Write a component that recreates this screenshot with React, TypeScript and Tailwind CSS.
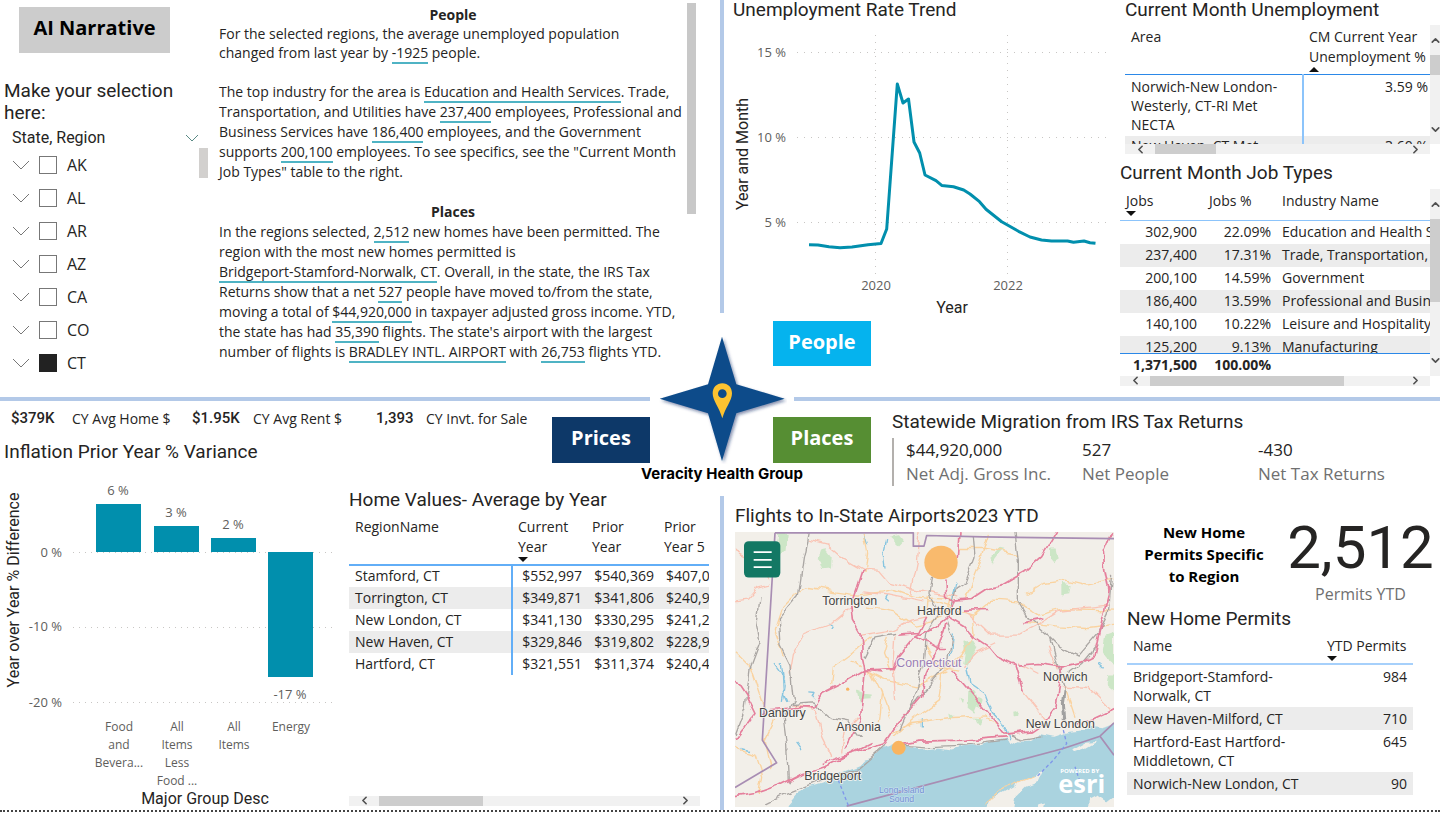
import React from "react";
import { ChevronDown, ChevronLeft, ChevronRight, ChevronUp } from "lucide-react";

const states = ["AK", "AL", "AR", "AZ", "CA", "CO", "CT"];

const jobs = [
  ["302,900", "22.09%", "Education and Health Services"],
  ["237,400", "17.31%", "Trade, Transportation, and Utilities"],
  ["200,100", "14.59%", "Government"],
  ["186,400", "13.59%", "Professional and Business Services"],
  ["140,100", "10.22%", "Leisure and Hospitality"],
  ["125,200", "9.13%", "Manufacturing"],
];

const homes = [
  ["Stamford, CT", "$552,997", "$540,369", "$407,012"],
  ["Torrington, CT", "$349,871", "$341,806", "$240,935"],
  ["New London, CT", "$341,130", "$330,295", "$241,208"],
  ["New Haven, CT", "$329,846", "$319,802", "$228,941"],
  ["Hartford, CT", "$321,551", "$311,374", "$240,460"],
];

const permits = [
  ["Bridgeport-Stamford-Norwalk, CT", "984"],
  ["New Haven-Milford, CT", "710"],
  ["Hartford-East Hartford-Middletown, CT", "645"],
  ["Norwich-New London, CT", "90"],
];

const Title = ({ children }: { children: React.ReactNode }) => (
  <h2 className="font-['Roboto',sans-serif] text-[19px] leading-5 whitespace-nowrap">{children}</h2>
);

const Fact = ({ children }: { children: React.ReactNode }) => (
  <span className="border-b-2 border-[#4fb3c4]">{children}</span>
);

const SortMark = ({ up }: { up?: boolean }) => (
  <svg viewBox="0 0 10 5" className="block h-[5px] w-[10px]">
    <path d={up ? "M0 5h10L5 0z" : "M0 0h10L5 5z"} fill="#111" />
  </svg>
);

const HScroll = ({ thumb }: { thumb: string }) => (
  <div className="flex h-[10px] items-center bg-[#f1f1f1]">
    <button aria-label="Scroll left" className="flex w-[30px] justify-center">
      <ChevronLeft size={13} strokeWidth={3} color="#505050" />
    </button>
    <div className="h-full flex-1">
      <div className={"h-full bg-[#cdcdcd] " + thumb}></div>
    </div>
    <button aria-label="Scroll right" className="flex w-[30px] justify-center">
      <ChevronRight size={13} strokeWidth={3} color="#505050" />
    </button>
  </div>
);

const VScroll = ({ thumb }: { thumb: string }) => (
  <div className="flex w-[10px] shrink-0 flex-col items-center overflow-hidden bg-[#f1f1f1]">
    <button aria-label="Scroll up" className="flex h-[30px] items-center">
      <ChevronUp size={13} strokeWidth={3} color="#505050" />
    </button>
    <div className="w-full flex-1">
      <div className={"w-full bg-[#cdcdcd] " + thumb}></div>
    </div>
    <button aria-label="Scroll down" className="flex h-[30px] items-center">
      <ChevronDown size={13} strokeWidth={3} color="#505050" />
    </button>
  </div>
);

const Slicer = () => (
  <div className="w-[219px] shrink-0 pt-[7px]">
    <button className="ml-[19px] h-[46px] w-[151px] bg-[#ccc] pb-1 text-xl font-bold text-black">
      AI Narrative
    </button>
    <h2 className="mt-[27px] ml-1 font-['Roboto',sans-serif] text-[19px] leading-[22px]">
      Make your selection here:
    </h2>
    <div className="mt-1 mr-5 ml-3 flex h-5 items-center justify-between font-['Roboto',sans-serif] text-base">
      State, Region
      <svg viewBox="0 0 14 8" className="h-2 w-[14px]">
        <path d="M1 1l6 6 6-6" fill="none" stroke="#5a8a85" />
      </svg>
    </div>
    <div className="flex">
      <ul className="w-[199px]">
        {states.map((s) => (
          <li key={s} className="flex h-[33px] items-center pl-3">
            <svg viewBox="0 0 18 10" className="h-[10px] w-[18px]">
              <path d="M1 1l8 8 8-8" fill="none" stroke="#777" />
            </svg>
            <label className="ml-[9px] flex items-center gap-[10px] text-base">
              <input
                type="checkbox"
                defaultChecked={s === "CT"}
                className="h-[18px] w-[18px] appearance-none border border-[#777] bg-white checked:border-[#222] checked:bg-[#222]"
              />
              {s}
            </label>
          </li>
        ))}
      </ul>
      <div className="h-[30px] w-[9px] bg-[#d2d0ce]"></div>
    </div>
  </div>
);

const Narrative = () => (
  <div className="w-[468px] shrink-0 pt-[5px] text-sm whitespace-nowrap">
    <h3 className="text-center leading-[19px] font-bold">People</h3>
    <p className="leading-[19px]">
      For the selected regions, the average unemployed population
      <br />
      changed from last year by <Fact>-1925</Fact> people.
    </p>
    <p className="mt-5 leading-5">
      The top industry for the area is <Fact>Education and Health Services</Fact>. Trade,
      <br />
      Transportation, and Utilities have <Fact>237,400</Fact> employees, Professional and
      <br />
      Business Services have <Fact>186,400</Fact> employees, and the Government
      <br />
      supports <Fact>200,100</Fact> employees. To see specifics, see the "Current Month
      <br />
      Job Types" table to the right.
    </p>
    <h3 className="mt-5 text-center leading-5 font-bold">Places</h3>
    <p className="leading-5">
      In the regions selected, <Fact>2,512</Fact> new homes have been permitted. The
      <br />
      region with the most new homes permitted is
      <br />
      <Fact>Bridgeport-Stamford-Norwalk, CT</Fact>. Overall, in the state, the IRS Tax
      <br />
      Returns show that a net <Fact>527</Fact> people have moved to/from the state,
      <br />
      moving a total of <Fact>$44,920,000</Fact> in taxpayer adjusted gross income. YTD,
      <br />
      the state has had <Fact>35,390</Fact> flights. The state's airport with the largest
      <br />
      number of flights is <Fact>BRADLEY INTL. AIRPORT</Fact> with <Fact>26,753</Fact> flights YTD.
    </p>
  </div>
);

const TrendChart = () => (
  <svg viewBox="0 20 388 300" className="block h-[300px] w-[388px]">
    <g stroke="#c8c6c4" strokeWidth="1" strokeDasharray="1 6">
      <path d="M73 52.5H382M73 137.5H382M73 222.5H382M151.500 35V275M283.500 35V275" />
    </g>
    <g fill="#605e5c" fontSize="13">
      <text x="62" y="57" textAnchor="end">15 %</text>
      <text x="62" y="142" textAnchor="end">10 %</text>
      <text x="62" y="227" textAnchor="end">5 %</text>
      <text x="152" y="290" textAnchor="middle">2020</text>
      <text x="284" y="290" textAnchor="middle">2022</text>
    </g>
    <g fill="#252423" fontSize="16" fontFamily="Roboto, sans-serif" textAnchor="middle">
      <text x="228" y="313">Year</text>
      <text transform="translate(24 154) rotate(-90)">Year and Month</text>
    </g>
    <polyline
      points="85,244.700 94,245 105,246.700 116,247.700 128,247 144,244.700 157,243.500 162.700,229 173.300,84 179,103 184.500,99 190,142 195.700,153 201,175 212,180.700 217.700,185.400 229.500,186.700 239.700,190 246,194 255.500,201.700 262,209.300 277.700,221.700 294.500,231.300 306,237 317.500,240 327.500,241 343.500,241 349.500,242.300 360,241 366,242.700 371.500,243.300"
      fill="none"
      stroke="#018fad"
      strokeWidth="3"
      strokeLinejoin="round"
    />
  </svg>
);

const UnemploymentTable = () => (
  <div>
    <div className="flex h-[119px]">
      <div className="min-w-0 flex-1 overflow-hidden pt-0.5">
        <table className="w-full table-fixed text-sm">
          <thead>
            <tr className="border-b border-[#2b88e8] text-left align-top leading-5">
              <th className="w-[178px] pl-1.5 font-normal">Area</th>
              <th className="pb-0.5 pl-1.5 font-normal whitespace-nowrap">
                CM Current Year
                <br />
                Unemployment %
                <SortMark up />
              </th>
            </tr>
          </thead>
          <tbody className="align-top leading-[19px]">
            <tr>
              <td className="border-r-2 border-[#8cc4fb] py-0.5 pl-1.5">
                Norwich-New London-Westerly, CT-RI Met NECTA
              </td>
              <td className="py-0.5 pr-0.5 text-right">3.59 %</td>
            </tr>
            <tr className="bg-[#ececec] whitespace-nowrap">
              <td className="border-r-2 border-[#8cc4fb] pl-1.5">New Haven, CT Met</td>
              <td className="pr-0.5 text-right">3.60 %</td>
            </tr>
          </tbody>
        </table>
      </div>
      <VScroll thumb="h-5" />
    </div>
    <div className="mr-[10px]">
      <HScroll thumb="w-[61px]" />
    </div>
  </div>
);

const JobsTable = () => (
  <div>
    <div className="flex">
      <div className="min-w-0 flex-1">
        <div className="h-[164px] overflow-hidden">
          <table className="w-full table-fixed text-sm whitespace-nowrap">
            <thead>
              <tr className="border-b border-[#8cc4fb] text-left align-top leading-5">
                <th className="w-[77px] pt-0.5 pb-1 pl-1.5 font-normal">
                  Jobs
                  <SortMark />
                </th>
                <th className="w-[74px] pt-0.5 pl-3 font-normal">Jobs %</th>
                <th className="pt-0.5 pl-[11px] font-normal">Industry Name</th>
              </tr>
            </thead>
            <tbody>
              {jobs.map((j) => (
                <tr key={j[0]} className="h-[23px] leading-5 even:bg-[#ececec]">
                  <td className="text-right">{j[0]}</td>
                  <td className="text-right">{j[1]}</td>
                  <td className="overflow-hidden pl-[11px]">{j[2]}</td>
                </tr>
              ))}
            </tbody>
          </table>
        </div>
        <table className="w-full table-fixed text-sm font-bold">
          <tbody>
            <tr className="h-[22px] border-t border-[#2b88e8] leading-5">
              <td className="w-[77px] text-right">1,371,500</td>
              <td className="w-[74px] text-right">100.00%</td>
              <td></td>
            </tr>
          </tbody>
        </table>
      </div>
      <VScroll thumb="h-[83px]" />
    </div>
    <div className="mr-[10px]">
      <HScroll thumb="w-[194px]" />
    </div>
  </div>
);

const Logo = () => (
  <div className="absolute top-[-62px] left-1/2 flex w-[180px] -translate-x-1/2 flex-col items-center">
    <svg viewBox="55 78 390 385" className="h-[129px] w-[130px]">
      <defs>
        <filter id="shade" x="-10%" y="-10%" width="120%" height="120%">
          <feDropShadow dx="5" dy="6" stdDeviation="4" floodColor="#0c2c66" floodOpacity="0.5" />
        </filter>
      </defs>
      <path
        d="M250 82L293 225 438 268 293 312 250 455 208 312 63 268 208 225z"
        fill="#0f4c8a"
        filter="url(#shade)"
      />
      <path
        fillRule="evenodd"
        d="M251 222c-17 0-29 13-29 30 0 22 20 43 29 75 9-32 29-53 29-75 0-17-12-30-29-30zm0 18a13 13 0 1 1 0 26 13 13 0 0 1 0-26z"
        fill="#fdc331"
      />
    </svg>
    <p className="font-['Inter',sans-serif] text-[15px] leading-5 font-bold whitespace-nowrap text-black">
      Veracity Health Group
    </p>
  </div>
);

const bars = [
  { x: 96, y: 38, h: 48, label: "6 %", ly: 29, name: ["Food", "and", "Bevera..."] },
  { x: 154, y: 60, h: 26, label: "3 %", ly: 51, name: ["All", "Items", "Less", "Food ..."] },
  { x: 211, y: 72, h: 14, label: "2 %", ly: 63, name: ["All", "Items"] },
  { x: 268, y: 86, h: 125, label: "-17 %", ly: 233, name: ["Energy"] },
];

const InflationChart = () => (
  <svg viewBox="0 0 349 344" className="block h-[344px] w-[349px] shrink-0">
    <path
      d="M73 86.500H335M73 161.500H335M73 236.500H335"
      stroke="#c8c6c4"
      strokeDasharray="1 5"
    />
    <g fill="#605e5c" fontSize="12" textAnchor="middle">
      {bars.map((b) => (
        <g key={b.label}>
          <rect x={b.x} y={b.y} width="45" height={b.h} fill="#018fad" />
          <text x={b.x + 22} y={b.ly} fontSize="13">{b.label}</text>
          {b.name.map((n, i) => (
            <text key={n} x={b.x + 23} y={265 + i * 18}>{n}</text>
          ))}
        </g>
      ))}
    </g>
    <g fill="#605e5c" fontSize="13" textAnchor="end">
      <text x="62" y="91">0 %</text>
      <text x="62" y="165">-10 %</text>
      <text x="62" y="241">-20 %</text>
    </g>
    <g fill="#252423" fontSize="16" fontFamily="Roboto, sans-serif" textAnchor="middle">
      <text x="205" y="338">Major Group Desc</text>
      <text transform="translate(19 124) rotate(-90)">Year over Year % Difference</text>
    </g>
  </svg>
);

const HomeValues = () => (
  <div className="flex min-w-0 flex-1 flex-col pt-6 pb-1">
    <Title>Home Values- Average by Year</Title>
    <div className="mt-[7px] mr-[11px] overflow-hidden">
      <table className="w-[390px] table-fixed text-sm">
        <thead>
          <tr className="border-b-2 border-[#62aef7] text-left align-top leading-5">
            <th className="w-[163px] pl-1.5 font-normal">RegionName</th>
            <th className="w-[74px] pb-0.5 pl-1.5 font-normal">
              Current
              <br />
              Year
              <SortMark />
            </th>
            <th className="w-[72px] pl-1.5 font-normal">
              Prior
              <br />
              Year
            </th>
            <th className="pl-1.5 font-normal whitespace-nowrap">
              Prior
              <br />
              Year 5
            </th>
          </tr>
        </thead>
        <tbody>
          {homes.map((h) => (
            <tr key={h[0]} className="h-[22px] leading-5 even:bg-[#ececec]">
              <td className="border-r-2 border-[#62aef7] pl-1.5">{h[0]}</td>
              <td className="pr-1 text-right">{h[1]}</td>
              <td className="pr-1 text-right">{h[2]}</td>
              <td className="pl-2">{h[3]}</td>
            </tr>
          ))}
        </tbody>
      </table>
    </div>
    <div className="mt-auto mr-5">
      <HScroll thumb="w-[104px]" />
    </div>
  </div>
);

const FlightsMap = () => (
  <svg viewBox="30 96 1137 824" className="block h-[275px] w-[379px]" fill="none" strokeLinejoin="round">
    <defs>
      {/* roughens roads and shoreline so they don't read as straight segments */}
      <filter id="wiggle" x="0" y="0" width="100%" height="100%">
        <feTurbulence type="fractalNoise" baseFrequency="0.022" numOctaves="2" seed="4" />
        <feDisplacementMap in="SourceGraphic" scale="26" xChannelSelector="R" yChannelSelector="G" />
      </filter>
    </defs>
    <rect x="30" y="96" width="1137" height="824" fill="#f2efe9" />
    <g filter="url(#wiggle)">
      <rect x="0" y="66" width="1197" height="884" fill="#f2efe9" />
      <path
        d="M185 950V915L215 880 250 862 290 850 330 825 360 812 400 795 420 775 445 770 470 745 500 732 520 755 540 735 570 742 600 748 640 742 680 748 710 738 740 735 770 735 800 725 840 715 855 735 880 720 910 722 950 702 985 710 1030 695 1080 690 1100 680 1130 684 1200 665V950z"
        fill="#aad3df"
      />
      <path
        d="M780 950L800 900 830 882 870 860 895 840 930 830 955 808 940 845 905 860 870 895 860 950zM1045 750L1085 728 1115 725 1080 745 1050 756zM1090 940l5-45 20-10 30 20 50-40v75zM930 950l10-35 20-5-5 40z"
        fill="#f2efe9"
      />
      <g fill="#cce6c6">
        <path d="M160 98h28l-3 50-18 18-12-22zM285 155l20-5 15 20-2 35-20 2-8-22-12-8zM715 425l30-5 15 25-14 20-18 32-14-8 6-35zM1012 248l28 4-4 30-24 4zM1140 410l27-10v90l-20-15-15-20zM1150 520l20 0v50l-25-20zM800 165l22-20 16 4-20 20-18 25zM975 145h20l6 30-14 8-12-14zM495 110l30-5 12 16-14 14zM395 570l20 8 22 2v14l-24 2-8 18zM730 570l20 5 10 30-12 30-20-15zM760 590l16 8-6 24-14-6zM865 635l20-5-3 20-16 2zM745 655l24 4-4 20-15-4zM700 590l14 4-4 16zM670 640l12 8-8 14z" />
      </g>
      <g stroke="#86c5e0" strokeWidth="4">
        <path d="M485 120l-8 40 6 48M150 495l22 30 4 60 10 20M172 495l8 60-8 50M488 285l-6 10 10 8M308 372l12 6-6 10M250 578l20 2-6 14M592 660v22M690 250l-10 50M685 400l-6 70M415 98l10 34M1120 490l16 14M218 728l16 22M50 745l22 6M725 500l10 50 50 35 20 55 35 40 14 40" />
      </g>
      <g stroke="#fad3a0" strokeWidth="4">
        <path d="M215 280L250 262 330 275 400 285 470 275 500 268 560 290 620 300 700 330 745 345 800 300 880 305 940 345 1020 325 1167 330M415 98l10 60-8 60M215 280l-50 50-20 60 30 80M420 320l90 15 60 40 50-10 60-40M700 145h80l100 18M745 345l5 60-40 60-60 60-10 80-70 50-60 50M440 410l-60 50-55 40-5 55M420 510l60 30 90 20 100-45M440 520l30 60-10 80M465 570l30 80M500 700l60-30 120-15 100-5 30 20M30 455l50 50 40 120M790 98l-30 100-40 100M905 280l50-30 70-10 60 15 80-15M905 370l90 10 90 5 90-10M150 660l-30 60 20 90M30 745l60 20 20 60-10 60M785 915l50-50 40-15 50-20M1020 560l30 90M610 290l-5 40 60 10 10-45zM490 410l-15 50 20 50M600 440l40 60 60 10M380 480l30 20" />
      </g>
      <g stroke="#fac4b4" strokeWidth="4">
        <path d="M250 120L310 135 350 170 415 208 460 210 490 245 560 265 700 290M585 98l-8 90-20 100M30 305l35-5 30-35 40-10M30 150l60 30 40 60M380 320l-60 50-80 30-35 60-10 60M415 275l80 10 100 20M410 405l90-15 60-30 45-10M510 400l-6 90 8 110M720 330l80 75 80 0 50-25 80-50 140-15M880 490l60 30M715 500l40-40 60-30M200 610l70 20 20 80 30 60M400 650l-40 40-10 70M1010 560l80 5 70 70M890 570l40 50 30 40M970 440l30 70" />
      </g>
      <g stroke="#aaa6a3" strokeWidth="4">
        <path d="M250 96l-15 80-15 110-60 70 5 80 30 60 10 100-30 60 10 80 5 110M105 290l-10 90 10 45-30 80-15 120-30 80M200 610l60-5 60 50 50 10 40 50M620 230l-8 50 30 60-40 60-8 90-30 110-40 90M745 110l5 60-30 80-30 20-15 60M870 98l10 80 0 120 35 60 55 50 30 30 60 30 60-70 30-60 10-110M975 410l25 90 20 60-5 100M660 350l20 60-10 80-70 80-50 60M420 470l30-60 60-10M1030 520l40-30 50-60M855 705l40 12 60-10M530 735l70 5 120-5 120-15M480 735l-80 70-120 40-100 40-60 30" />
        <path d="M1020 570l-5 40 5 50" stroke="#a0a0a0" strokeWidth="9" />
      </g>
      <g stroke="#e57f9c" strokeWidth="5">
        <path d="M415 208L398 260 380 310 385 360 408 400 412 470 420 510 415 580 405 660 360 750M995 96L950 170 900 215 830 255 790 262 740 295 690 300 670 350 720 380 745 410 790 440 815 470 870 495 880 530 895 575M660 235l2 60 30 10M705 96l-5 75M1160 96l-25 60 5 60 12 60-25 100-20 90-40 20-60 15-7 60-10 60-30 40M880 495l60-5 70 10M680 510l60 70 50 60 50 62 80-10 30-20M1050 670l60-15 87-40M670 350l-40 30-60 30-50 60-15 35-85 5-70 40-60 30-25 40-55 0-70 5-20 15-10 10M605 350l-25 50-60 5M660 370l-20 65-40 90-10 65-70 80-40 60-130 40-60 20M520 735l60-12 140-3 120-10M30 540l40 60 20 40-60 80M30 890l60-10 70-25 60-30 90-30 130-65M570 410l60 35 30 0M720 330l75-2M895 368l60-12M420 510l50 5" />
      </g>
    </g>
    <g stroke="#a88db3" strokeWidth="5">
      <path d="M150 98h415v40h32l8-32 170 4 420 6M150 98L112 720 155 788 30 862M365 918L1015 745 1125 708 1167 765M1125 708l42-40" />
    </g>
    <g stroke="#7f96ea" strokeWidth="4" strokeDasharray="10 8">
      <path d="M340 840l30 76M1015 690l10 40-40 50-50 50M1050 800l20 60" />
    </g>
    <circle cx="648" cy="187" r="50" fill="#f9b45f" fillOpacity=".9" />
    <circle cx="521" cy="743" r="21" fill="#f9b45f" />
    <circle cx="368" cy="567" r="5" fill="#f9b45f" />
    <g
      fill="#444"
      stroke="#f8f5f0"
      strokeWidth="5"
      paintOrder="stroke"
      fontFamily="'Liberation Sans', sans-serif"
      fontSize="37"
    >
      <text x="292" y="316">Torrington</text>
      <text x="576" y="346">Hartford</text>
      <text x="954" y="544">Norwich</text>
      <text x="102" y="651">Danbury</text>
      <text x="334" y="694">Ansonia</text>
      <text x="902" y="684">New London</text>
      <text x="238" y="839">Bridgeport</text>
      <text x="514" y="501" fill="#9a7eb5">Connecticut</text>
      <g fill="#6f8fd0" fontSize="26" stroke="#cfe3f2" strokeWidth="3">
        <text x="462" y="878">Long-Island</text>
        <text x="492" y="907">Sound</text>
      </g>
    </g>
    <g fill="#fff" fontFamily="'Open Sans', sans-serif" fontWeight="bold">
      <text x="1006" y="819" fontSize="18">POWERED BY</text>
      <text x="1000" y="880" fontSize="76">esri</text>
    </g>
    <rect x="57" y="123" width="109" height="109" rx="14" fill="#137864" />
    <path d="M86 156h54M86 179h54M86 201h54" stroke="#fff" strokeWidth="5" />
  </svg>
);

const PermitsTable = () => (
  <table className="mt-[7px] w-[286px] table-fixed text-sm">
    <thead>
      <tr className="border-b-2 border-[#a6d0fb] text-left align-top leading-5">
        <th className="pl-1.5 font-normal">Name</th>
        <th className="w-[90px] pb-0.5 pl-1 font-normal whitespace-nowrap">
          YTD Permits
          <SortMark />
        </th>
      </tr>
    </thead>
    <tbody>
      {permits.map((p) => (
        <tr key={p[0]} className="align-top leading-[19px] even:bg-[#ececec]">
          <td className="py-0.5 pl-1.5">{p[0]}</td>
          <td className="py-0.5 pr-1.5 text-right">{p[1]}</td>
        </tr>
      ))}
    </tbody>
  </table>
);

const App = () => {
  return (
    <main className="w-full min-w-[1440px] border-b-2 border-dotted border-[#444] bg-white font-['Open_Sans','Noto_Sans',sans-serif] text-[#252423]">
      <div className="flex">
        <section className="flex w-1/2">
          <Slicer />
          <Narrative />
          <div className="mt-[3px] h-[211px] w-[9px] bg-[#c8c8c8]"></div>
        </section>
        <div className="mb-[84px] w-1 bg-[#b3c9e8]"></div>
        <section className="flex flex-1 justify-between">
          <div>
            <div className="pl-[9px]">
              <Title>Unemployment Rate Trend</Title>
            </div>
            <TrendChart />
            <button className="mt-px ml-[49px] h-[45px] w-[98px] bg-[#05b3ee] pb-1 text-xl font-bold text-white">
              People
            </button>
          </div>
          <div className="w-[320px] pb-[11px]">
            <div className="pl-[5px]">
              <Title>Current Month Unemployment</Title>
              <div className="mt-[5px]">
                <UnemploymentTable />
              </div>
            </div>
            <div className="mt-[9px]">
              <Title>Current Month Job Types</Title>
              <div className="mt-1.5">
                <JobsTable />
              </div>
            </div>
          </div>
        </section>
      </div>

      <div className="flex">
        <div className="h-1 w-[calc(50%-70px)] bg-[#b3c9e8]"></div>
        <div className="relative w-[144px]">
          <Logo />
        </div>
        <div className="h-1 flex-1 bg-[#b3c9e8]"></div>
      </div>

      <div className="flex">
        <section className="w-1/2">
          <div className="flex">
            <div className="w-[552px] pl-1">
              <div className="mt-2 flex h-5 items-center text-sm whitespace-nowrap">
                <b className="w-[68px] pl-[7px] font-['Roboto',sans-serif] text-[15px] font-medium">$379K</b>
                <span className="w-[120px]">CY Avg Home $</span>
                <b className="w-[61px] font-['Roboto',sans-serif] text-[15px] font-medium">$1.95K</b>
                <span className="w-[123px]">CY Avg Rent $</span>
                <b className="w-[50px] font-['Roboto',sans-serif] text-[15px] font-medium">1,393</b>
                <span>CY Invt. for Sale</span>
              </div>
              <div className="mt-[13px]">
                <Title>Inflation Prior Year % Variance</Title>
              </div>
            </div>
            <button className="mt-4 h-[46px] w-[98px] bg-[#0d3868] pb-1 text-xl font-bold text-white">
              Prices
            </button>
          </div>
          <div className="mt-[3px] flex">
            <InflationChart />
            <HomeValues />
          </div>
        </section>
        <div className="mt-[95px] w-1 bg-[#b3c9e8]"></div>
        <section className="flex-1">
          <div className="flex">
            <button className="mt-4 ml-[49px] h-[46px] w-[98px] bg-[#568e33] pb-1 text-xl font-bold text-white">
              Places
            </button>
            <div className="mt-[11px] ml-[21px] flex-1">
              <Title>Statewide Migration from IRS Tax Returns</Title>
              <dl className="mt-1.5 flex h-12 border-l-2 border-[#b3b0ad] pl-3 text-[17px] leading-6 whitespace-nowrap">
                <div className="flex w-44 flex-col-reverse">
                  <dt className="text-[#707070]">Net Adj. Gross Inc.</dt>
                  <dd>$44,920,000</dd>
                </div>
                <div className="flex w-44 flex-col-reverse">
                  <dt className="text-[#707070]">Net People</dt>
                  <dd>527</dd>
                </div>
                <div className="flex flex-col-reverse">
                  <dt className="text-[#707070]">Net Tax Returns</dt>
                  <dd>-430</dd>
                </div>
              </dl>
            </div>
          </div>
          <div className="mt-5 flex justify-between pl-[11px]">
            <div>
              <Title>Flights to In-State Airports2023 YTD</Title>
              <div className="mt-1.5">
                <FlightsMap />
              </div>
            </div>
            <div className="w-[313px]">
              <div className="mt-3 flex">
                <p className="mt-[3px] w-[154px] text-center text-[15px] leading-[22px] font-bold text-black">
                  New Home
                  <br />
                  Permits Specific
                  <br />
                  to Region
                </p>
                <div className="flex-1 text-center whitespace-nowrap">
                  <p className="font-['Roboto',sans-serif] text-[60px] leading-[60px]">2,512</p>
                  <p className="mt-1.5 text-base leading-5 text-[#707070]">Permits YTD</p>
                </div>
              </div>
              <div className="mt-[5px]">
                <Title>New Home Permits</Title>
              </div>
              <PermitsTable />
            </div>
          </div>
        </section>
      </div>
    </main>
  );
};

export default App;
